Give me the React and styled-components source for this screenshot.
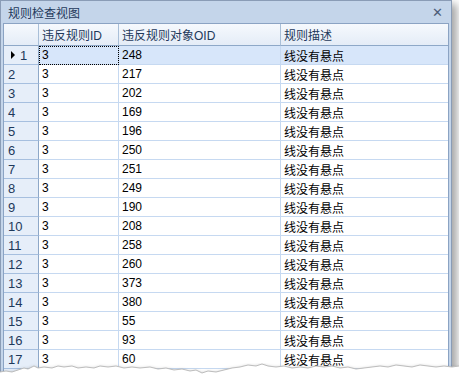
import React from 'react';
import styled, { createGlobalStyle } from 'styled-components';

const GlobalStyle = createGlobalStyle`
  html, body {
    margin: 0;
    padding: 0;
    background: #fff;
    overflow: hidden;
  }
  body {
    font-family: "Liberation Sans", "Noto Sans CJK SC", sans-serif;
    font-size: 12px;
  }
`;

const rows = [
  ['3', '248'], ['3', '217'], ['3', '202'], ['3', '169'], ['3', '196'],
  ['3', '250'], ['3', '251'], ['3', '249'], ['3', '190'], ['3', '208'],
  ['3', '258'], ['3', '260'], ['3', '373'], ['3', '380'], ['3', '55'],
  ['3', '93'], ['3', '60'],
];

// jagged tear line across the bottom of the picture
const tear =
  'M0 16 L6 15 L12 16 L18 14 L24 12 L28 13 L34 10 L38 12 L44 11 L52 12 L58 10 L64 11 L72 10 L78 12 L86 11 L94 12 L100 10 L108 11 L116 10 L124 12 L132 11 L140 12 L150 11 L158 13 L166 12 L174 14 L182 13 L190 15 L196 14 L202 17 L208 15 L216 16 L224 14 L232 12 L240 11 L248 9 L256 10 L262 8 L268 10 L276 11 L284 10 L292 12 L300 11 L308 12 L316 10 L324 11 L332 10 L340 12 L348 11 L356 13 L364 12 L372 11 L380 10 L388 11 L396 9 L404 10 L412 11 L420 9 L428 10 L436 11 L444 10 L452 11 L459 10';

const Stage = styled.div`
  position: relative;
  width: 459px;
  height: 384px;
  overflow: hidden;
`;

const Window = styled.div`
  width: 446px;
  border: 1px solid #8a9cb6;
  border-bottom: none;
  background: #c4d5ea;
  box-shadow: 5px 4px 8px rgba(0, 0, 0, 0.35);
  padding: 0 2px;
`;

const TitleBar = styled.div`
  height: 22px;
  display: flex;
  align-items: center;
  justify-content: space-between;
  padding: 0 6px 0 5px;
  color: #1e395b;
  font-size: 12px;
`;

const Close = styled.span`
  font-family: "DejaVu Sans", sans-serif;
  font-weight: bold;
  font-size: 13px;
  color: #4d5d78;
  line-height: 1;
`;

const Grid = styled.div`
  border: 1px solid #8ba3c3;
  border-bottom: none;
  background: #fff;
`;

const Row = styled.div`
  display: grid;
  grid-template-columns: 35px 80px 162px 1fr;
  height: ${p => (p.$head ? '22px' : '19px')};
`;

const HeadCell = styled.div`
  display: flex;
  align-items: center;
  padding-left: 3px;
  color: #1e395b;
  background: linear-gradient(#f6f9fd, #e4ecf7);
  border-right: 1px solid #a9bfd8;
  border-bottom: 1px solid #8ea8c8;
  &:last-child { border-right: none; }
`;

const Indicator = styled.div`
  display: flex;
  align-items: center;
  padding-left: 4px;
  font-size: 13px;
  color: #1e395b;
  background: #e6eef9;
  border-right: 1px solid #8ea8c8;
  border-bottom: 1px solid #a6bfdf;
`;

const Arrow = styled.span`
  width: 0;
  height: 0;
  border-top: 4px solid transparent;
  border-bottom: 4px solid transparent;
  border-left: 4px solid #000;
  margin: 0 5px 0 3px;
`;

const Cell = styled.div`
  display: flex;
  align-items: center;
  padding-left: 3px;
  color: #000;
  white-space: nowrap;
  background: ${p => (p.$selected ? '#d7e6fa' : '#fff')};
  border-right: 1px solid #c6d9f1;
  border-bottom: 1px solid #c6d9f1;
  outline: ${p => (p.$focus ? '1px dotted #000' : 'none')};
  outline-offset: -1px;
  &:last-child { border-right: none; }
`;

const Torn = styled.svg`
  position: absolute;
  left: 0;
  bottom: 0;
`;

export default function App() {
  return (
    <Stage>
      <GlobalStyle />
      <Window>
        <TitleBar>
          <span>规则检查视图</span>
          <Close>✕</Close>
        </TitleBar>
        <Grid>
          <Row $head>
            <HeadCell />
            <HeadCell>违反规则ID</HeadCell>
            <HeadCell>违反规则对象OID</HeadCell>
            <HeadCell>规则描述</HeadCell>
          </Row>
          {rows.map(([id, oid], i) => (
            <Row key={i}>
              <Indicator>
                {i === 0 && <Arrow />}
                {i + 1}
              </Indicator>
              <Cell $selected={i === 0} $focus={i === 0}>{id}</Cell>
              <Cell $selected={i === 0}>{oid}</Cell>
              <Cell $selected={i === 0}>线没有悬点</Cell>
            </Row>
          ))}
          <Row>
            <Indicator />
            <Cell />
            <Cell />
            <Cell />
          </Row>
        </Grid>
      </Window>
      <Torn width="459" height="28" viewBox="0 0 459 28">
        <defs>
          <filter id="blur" x="-5%" y="-50%" width="110%" height="200%">
            <feGaussianBlur stdDeviation="2" />
          </filter>
        </defs>
        <path
          d={tear}
          fill="none"
          stroke="rgba(0,0,0,0.5)"
          strokeWidth="4"
          filter="url(#blur)"
          transform="translate(0 4)"
        />
        <path d={`${tear} L459 28 L0 28 Z`} fill="#fff" />
        <path d={tear} fill="none" stroke="#bdbdbd" strokeWidth="1" />
      </Torn>
    </Stage>
  );
}
